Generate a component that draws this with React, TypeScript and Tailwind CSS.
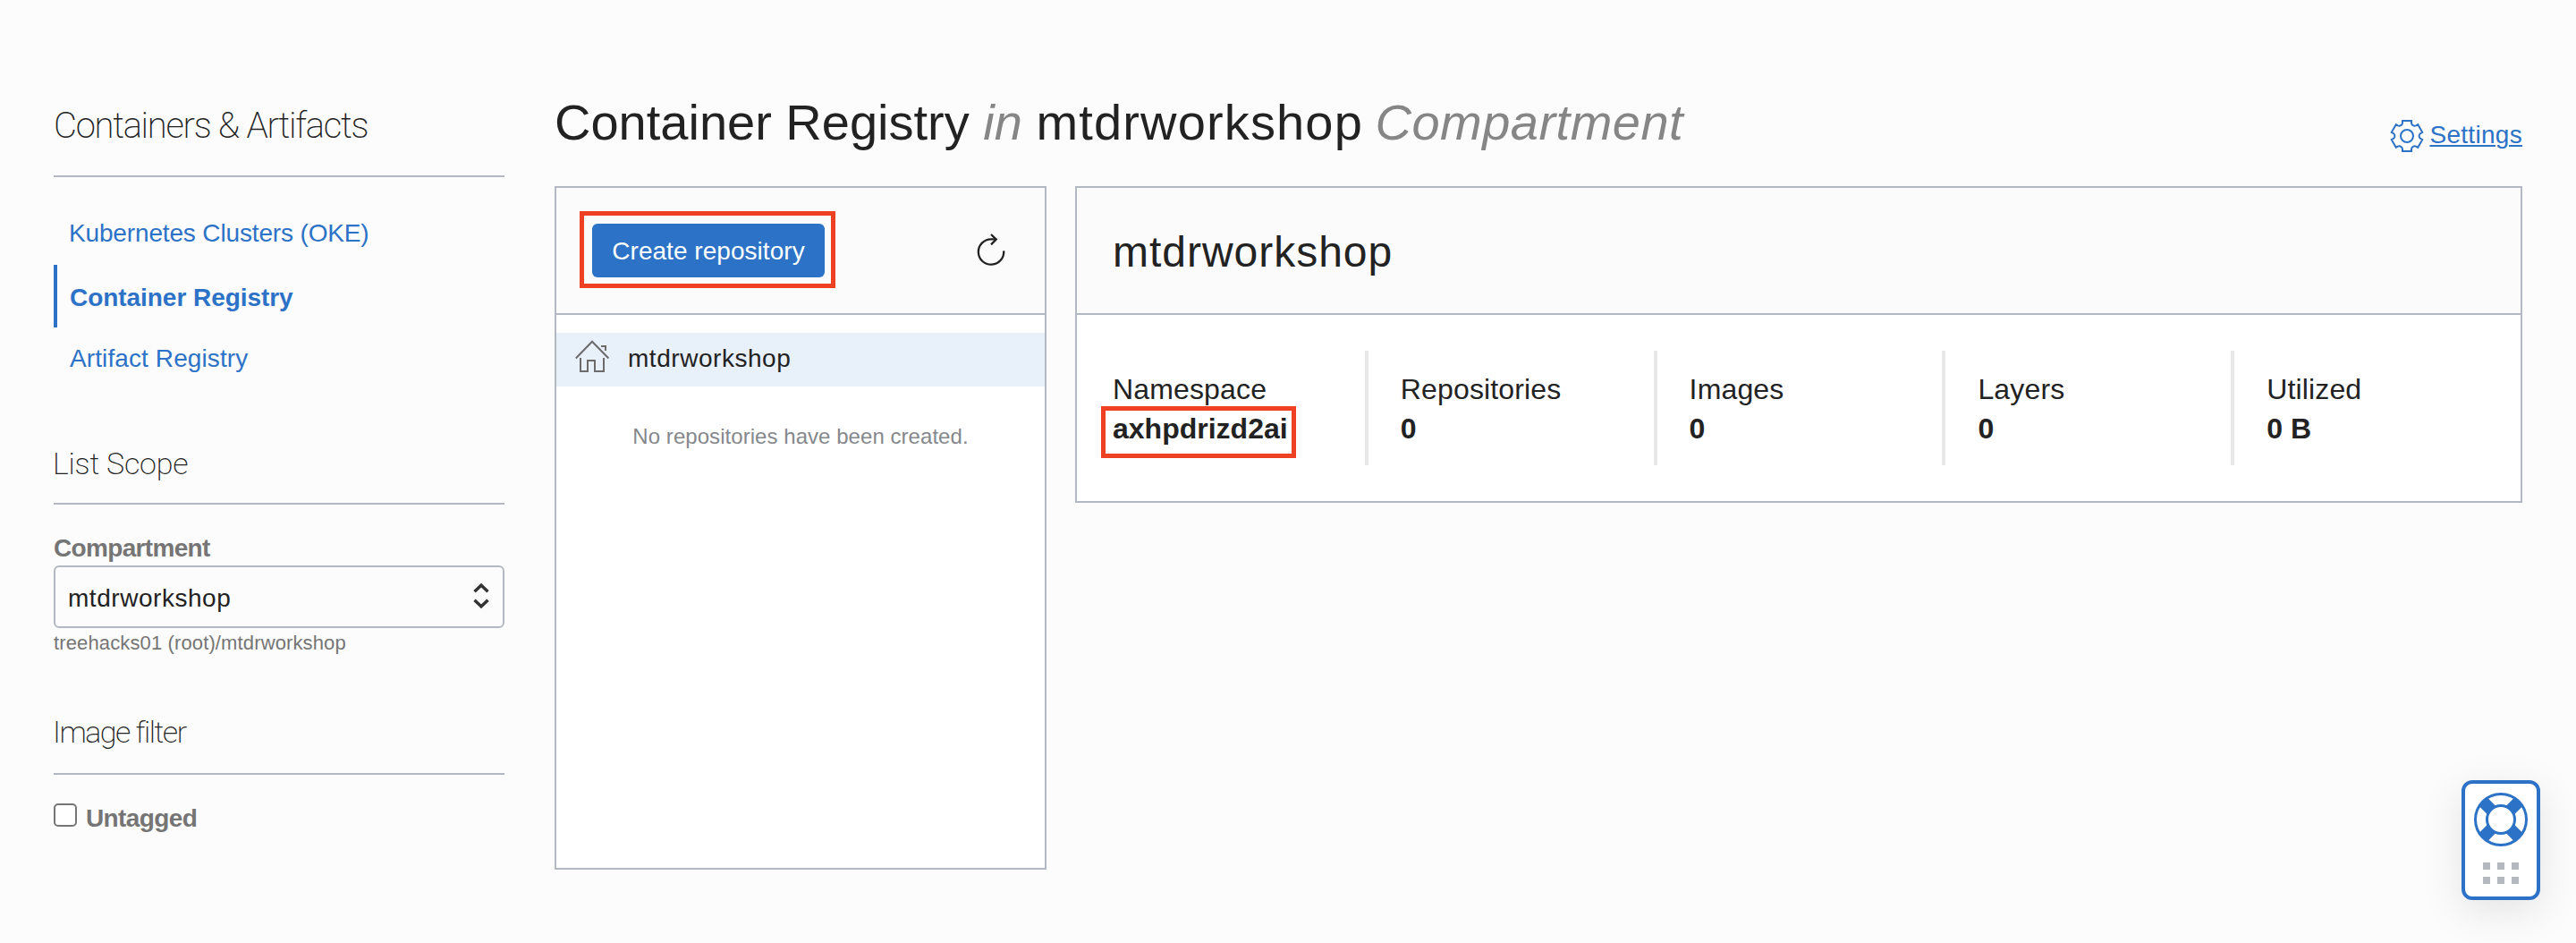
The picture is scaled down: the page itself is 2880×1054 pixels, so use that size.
import type { ReactNode } from 'react';

const stats = [
  { label: 'Namespace', value: 'axhpdrizd2ai', highlighted: true },
  { label: 'Repositories', value: '0' },
  { label: 'Images', value: '0' },
  { label: 'Layers', value: '0' },
  { label: 'Utilized', value: '0 B' },
];

function gearOutline() {
  const parts: string[] = [];
  for (let i = 0; i < 6; i++) {
    const a = (i * Math.PI) / 3;
    const p = (x: number, y: number) =>
      `${(x * Math.cos(a) - y * Math.sin(a)).toFixed(2)} ${(x * Math.sin(a) + y * Math.cos(a)).toFixed(2)}`;
    const start = i === 0 ? `M${p(-5, -14.6)}` : `A3.6 3.6 0 0 0 ${p(-5, -14.6)}`;
    parts.push(`${start}L${p(-5, -17)}L${p(5, -17)}L${p(5, -14.6)}`);
  }
  return `${parts.join('')}A3.6 3.6 0 0 0 -5 -14.6Z`;
}

function GearIcon() {
  return (
    <svg className="size-9 overflow-visible" viewBox="-18 -18 36 36" fill="none" stroke="currentColor" strokeWidth="2">
      <path d={gearOutline()} />
      <circle r="7" />
    </svg>
  );
}

function RefreshIcon() {
  return (
    <svg className="h-11 w-10" viewBox="0 0 40 44" fill="none" stroke="#222" strokeWidth="2.3">
      <path d="M34.2 22.3A14.2 14.2 0 1 1 20 9.3H25.4" />
      <path d="M20 4L25.8 9.6L20 15.4" />
    </svg>
  );
}

function HomeIcon() {
  return (
    <svg className="size-10" viewBox="0 0 40 40" fill="none" stroke="#6b6b6b" strokeWidth="2">
      <path d="M1.8 20.5L20 1.8L38.4 20.5" />
      <path d="M7 20V35H15V23H23V35H33V20" />
      <path d="M30 7H35V12" />
    </svg>
  );
}

function LifebuoyIcon() {
  return (
    <svg className="size-[60px]" viewBox="-30 -30 60 60" fill="none" stroke="#2c72c7">
      <path d="M-20 -20L20 20M20 -20L-20 20" strokeWidth="13.2" />
      <circle r="28.5" strokeWidth="3" />
      <circle r="15.5" strokeWidth="3" fill="#fff" />
    </svg>
  );
}

function SectionTitle({ children, className }: { children: ReactNode; className: string }) {
  return (
    <h2 className={`border-b-2 border-[#b4b9c1] font-[Roboto] text-[34px] leading-[40px] font-extralight text-[#222] ${className}`}>
      {children}
    </h2>
  );
}

function Sidebar() {
  return (
    <aside className="w-[504px] shrink-0 pt-[121px]">
      <h1 className="border-b-2 border-[#b4b9c1] pb-[35px] font-[Roboto] text-[40px] leading-[40px] font-extralight tracking-[-1.28px] text-[#222]">
        Containers &amp; Artifacts
      </h1>
      <nav className="mt-[46px] flex flex-col text-[28px] leading-8 text-[#2c72c7]">
        <a className="h-[52px] pt-px pl-[17px] tracking-[-0.15px]">Kubernetes Clusters (OKE)</a>
        <a className="h-[70px] border-l-4 border-[#2c72c7] pt-[21px] pl-[14px] font-bold tracking-[-0.05px]">Container Registry</a>
        <a className="h-[50px] pt-[19px] pl-[18px] tracking-[0.1px]">Artifact Registry</a>
      </nav>

      <SectionTitle className="mt-[82px] -indent-px pb-6 tracking-[-0.2px]">List Scope</SectionTitle>
      <label className="mt-[33px] block text-[28px] leading-8 font-bold tracking-[-0.67px] text-[#757575]">Compartment</label>
      <div className="mt-[3px] flex h-[70px] items-center justify-between rounded-md border-2 border-[#b4b9c1] pt-[3px] pr-[15px] pl-[14px] text-[28px] tracking-[0.54px] text-[#222]">
        mtdrworkshop
        <svg className="-mt-[5px] h-[30px] w-[18px]" viewBox="0 0 18 30" fill="none" stroke="#333" strokeWidth="3.4">
          <path d="M1.5 10.2L9 3.2L16.5 10.2M1.5 19.8L9 26.8L16.5 19.8" />
        </svg>
      </div>
      <p className="mt-[3px] text-[22px] leading-7 tracking-[0.13px] text-[#757575]">treehacks01 (root)/mtdrworkshop</p>

      <SectionTitle className="mt-[65px] -indent-px pb-[26px] tracking-[-1.5px]">Image filter</SectionTitle>
      <div className="mt-8 flex gap-2.5">
        <span className="size-[26px] rounded-[5px] border-2 border-[#757575] bg-white" />
        <span className="pt-px text-[28px] leading-8 font-bold tracking-[-0.6px] text-[#757575]">Untagged</span>
      </div>
    </aside>
  );
}

function RepositoryPanel() {
  return (
    <section className="h-[764px] w-[550px] shrink-0 border-2 border-[#b4b9c1] bg-white">
      <header className="flex h-[142px] items-center justify-between border-b-2 border-[#b4b9c1] bg-[#fbfbfb] px-10">
        <div className="relative">
          <button className="block h-[60px] w-[260px] rounded-md bg-[#2c72c7] pt-px text-[28px] leading-8 tracking-[0.04px] text-white">
            Create repository
          </button>
          <span className="absolute -top-[14px] -right-3 -bottom-3 -left-[14px] border-[5px] border-[#ee4023]" />
        </div>
        <RefreshIcon />
      </header>
      <div className="mt-5 flex h-[60px] items-center gap-5 bg-[#e8f0fa] pb-1 pl-5 text-[28px] leading-8 tracking-[0.54px] text-[#222]">
        <HomeIcon />
        <span className="pt-0.5">mtdrworkshop</span>
      </div>
      <p className="mt-10 text-center text-[24px] leading-8 tracking-[0.05px] text-[#85888c]">No repositories have been created.</p>
    </section>
  );
}

function DetailPanel() {
  return (
    <section className="h-[354px] grow border-2 border-[#b4b9c1] bg-white text-[#222]">
      <header className="flex h-[142px] items-center border-b-2 border-[#b4b9c1] bg-[#fbfbfb] pt-1 pl-10 text-[48px] tracking-[0.98px]">
        mtdrworkshop
      </header>
      <dl className="grid grid-cols-5 py-10 text-[32px] leading-[44px]">
        {stats.map((s) => (
          <div key={s.label} className="h-32 border-l-4 border-[#e8e8e8] pt-[21px] pl-9 -ml-px first:ml-0 first:border-l-0 first:pl-10">
            <dt className="tracking-[0.15px]">{s.label}</dt>
            <dd className="relative font-bold">
              {s.value}
              {s.highlighted && <span className="absolute -top-[3px] -left-[13px] h-[58px] w-[218px] border-[5px] border-[#ee4023]" />}
            </dd>
          </div>
        ))}
      </dl>
    </section>
  );
}

function HelpWidget() {
  return (
    <div className="absolute top-[872px] right-10 flex h-[134px] w-[88px] flex-col items-center rounded-xl border-4 border-[#2c72c7] bg-white pt-[10px] shadow-[0_12px_48px_rgba(0,0,0,0.1)]">
      <LifebuoyIcon />
      <div className="mt-[18px] grid grid-cols-3 gap-2">
        {[0, 1, 2, 3, 4, 5].map((i) => (
          <span key={i} className="size-2 bg-[#b4b9c1]" />
        ))}
      </div>
    </div>
  );
}

export default function App() {
  return (
    <div className="relative flex h-[1054px] w-[2880px] gap-14 overflow-hidden bg-[#fcfcfc] px-[60px] font-['Liberation_Sans',Arial,sans-serif]">
      <Sidebar />
      <main className="flex grow flex-col pt-[105px]">
        <div className="flex h-[103px] items-start justify-between">
          <h1 className="text-[56px] leading-[64px] text-[#222]">
            <span>Container Registry</span> <em className="text-[#868686]">in</em>{' '}
            <span className="tracking-[1.15px]">mtdrworkshop</span>{' '}
            <em className="-ml-0.5 tracking-[0.49px] text-[#868686]">Compartment</em>
          </h1>
          <a className="mt-[29px] flex gap-[7px] text-[28px] leading-8 tracking-[0.3px] text-[#2c72c7]">
            <GearIcon />
            <span className="pt-px underline decoration-2 underline-offset-2">Settings</span>
          </a>
        </div>
        <div className="flex items-start gap-8">
          <RepositoryPanel />
          <DetailPanel />
        </div>
      </main>
      <HelpWidget />
    </div>
  );
}
